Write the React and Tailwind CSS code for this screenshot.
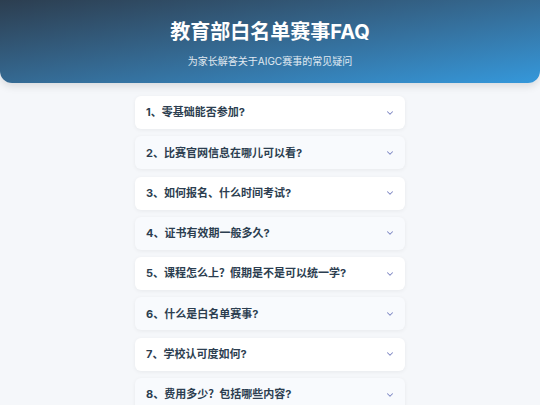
import { ChevronDown } from 'lucide-react';

const faqs = [
    '1、零基础能否参加?',
    '2、比赛官网信息在哪儿可以看?',
    '3、如何报名、什么时间考试?',
    '4、证书有效期一般多久?',
    '5、课程怎么上？假期是不是可以统一学?',
    '6、什么是白名单赛事?',
    '7、学校认可度如何?',
    '8、费用多少？包括哪些内容?',
];

export default function App() {
    return (
        <div className="min-h-screen bg-[#f5f7fa] font-['Inter','Noto_Sans_CJK_SC',sans-serif]">
            {/* Header */}
            <div className="h-[83px] rounded-b-[12px] bg-gradient-to-br from-[#2c3e50] to-[#3498db] shadow-[0_3px_8px_rgba(0,0,0,0.12)] flex flex-col items-center pt-[18px]">
                <h1 className="text-[20px] leading-[28px] font-bold text-white">教育部白名单赛事FAQ</h1>
                <p className="mt-[8px] text-[10px] leading-[14px] text-white/85">为家长解答关于AIGC赛事的常见疑问</p>
            </div>

            {/* FAQ list */}
            <div className="w-[270px] mx-auto mt-[13px] flex flex-col gap-[7.3px]">
                {faqs.map((q, idx) => (
                    <div
                        key={idx}
                        className={`h-[33px] rounded-[6px] pl-[11px] pr-[10px] flex items-center justify-between shadow-[0_1px_4px_rgba(0,0,0,0.06)] ${idx % 2 === 1 ? 'bg-[#f8fafd]' : 'bg-white'}`}
                    >
                        <span className="text-[11px] font-bold text-[#2c3e50]">{q}</span>
                        <ChevronDown size={10} strokeWidth={2.5} className="text-[#7c86c2]" />
                    </div>
                ))}
            </div>
        </div>
    );
}
